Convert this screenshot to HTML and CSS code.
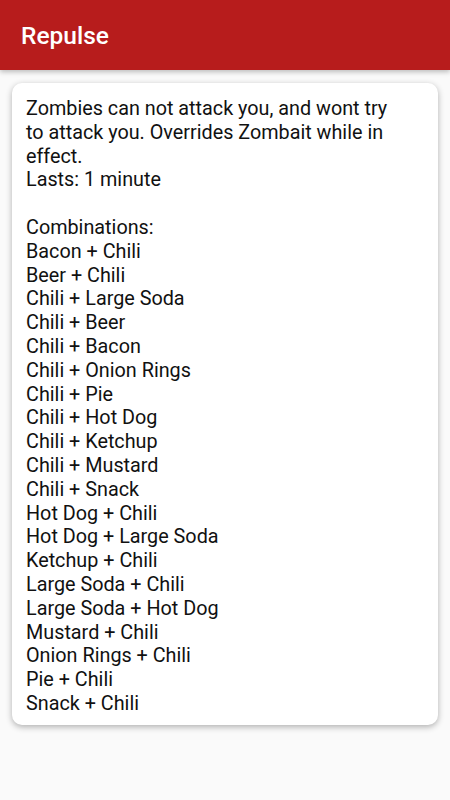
FILE: index.html
```html
<!DOCTYPE html>
<html lang="en">
  <head>
    <meta charset="UTF-8" />
    <meta name="viewport" content="width=device-width, initial-scale=1" />
    <title>Repulse</title>
    <link rel="stylesheet" href="styles.css">
  </head>
  <body>
    <header class="toolbar">
      <h1 class="toolbar-title">Repulse</h1>
    </header>
    <main class="content">
      <section class="card">
        <p class="card-text">Zombies can not attack you, and wont try to attack you. Overrides Zombait while in effect.<br />Lasts: 1 minute<br /><br />Combinations:<br />Bacon + Chili<br />Beer + Chili<br />Chili + Large Soda<br />Chili + Beer<br />Chili + Bacon<br />Chili + Onion Rings<br />Chili + Pie<br />Chili + Hot Dog<br />Chili + Ketchup<br />Chili + Mustard<br />Chili + Snack<br />Hot Dog + Chili<br />Hot Dog + Large Soda<br />Ketchup + Chili<br />Large Soda + Chili<br />Large Soda + Hot Dog<br />Mustard + Chili<br />Onion Rings + Chili<br />Pie + Chili<br />Snack + Chili</p>
      </section>
    </main>
  </body>
</html>
```
FILE: styles.css
```css
body {
  margin: 0;
  background-color: #fafafa;
  font-family: Roboto, "Noto Sans", sans-serif;
  color: #111;
}
.toolbar {
  background-color: #b71c1c;
  height: 70px;
  display: flex;
  align-items: center;
  padding: 0 21px;
  box-shadow: 0 2px 5px rgba(0, 0, 0, 0.25);
  position: relative;
}
.toolbar-title {
  margin: 0;
  color: #fff;
  font-size: 24.5px;
  font-weight: 500;
}
.content {
  padding: 13px 12px;
}
.card {
  background-color: #fff;
  border-radius: 10px;
  box-shadow: 0 2px 6px rgba(0, 0, 0, 0.3);
  padding: 14px 30px 9px 14px;
}
.card-text {
  margin: 0;
  font-size: 19.8px;
  line-height: 23.8px;
}
```
